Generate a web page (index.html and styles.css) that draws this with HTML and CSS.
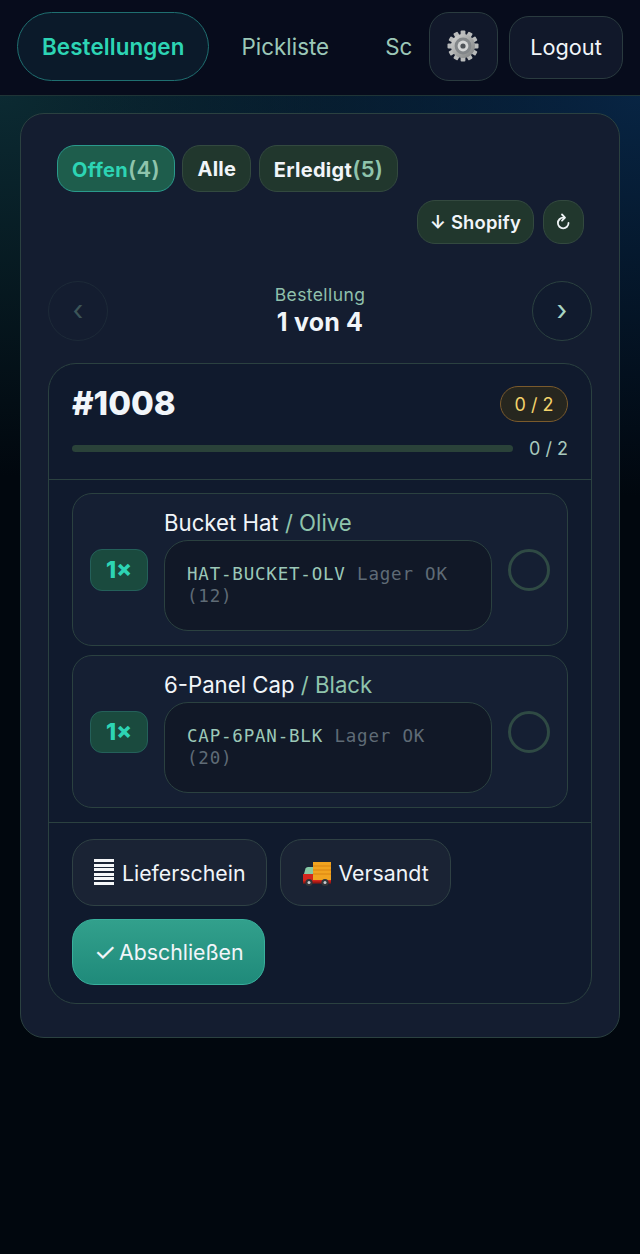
FILE: index.html
```html
<!DOCTYPE html>
<html lang="de">
<head>
    <meta charset="UTF-8">
    <meta name="viewport" content="width=device-width, initial-scale=1.0">
    <title>Bestellungen</title>
    <link rel="stylesheet" href="styles.css">
</head>
<body>
    <header class="topbar">
        <nav class="tabs">
            <a class="tab tab-active">Bestellungen</a>
            <a class="tab">Pickliste</a>
            <a class="tab">Sc</a>
        </nav>
        <button class="gear-btn" aria-label="Einstellungen">
            <svg class="gear" width="34" height="34" viewBox="0 0 34 34">
                <defs>
                    <linearGradient id="gearFill" x1="0" y1="0" x2="1" y2="1">
                        <stop offset="0" stop-color="#d8d9d8"/>
                        <stop offset="0.55" stop-color="#a2a4a4"/>
                        <stop offset="1" stop-color="#7d8081"/>
                    </linearGradient>
                </defs>
                <g fill="#b9bbbb">
                    <rect x="14.6" y="1.5" width="4.8" height="6" rx="1"/>
                    <rect x="14.6" y="1.5" width="4.8" height="6" rx="1" transform="rotate(30 17 17)"/>
                    <rect x="14.6" y="1.5" width="4.8" height="6" rx="1" transform="rotate(60 17 17)"/>
                    <rect x="14.6" y="1.5" width="4.8" height="6" rx="1" transform="rotate(90 17 17)"/>
                    <rect x="14.6" y="1.5" width="4.8" height="6" rx="1" transform="rotate(120 17 17)"/>
                    <rect x="14.6" y="1.5" width="4.8" height="6" rx="1" transform="rotate(150 17 17)"/>
                    <rect x="14.6" y="1.5" width="4.8" height="6" rx="1" transform="rotate(180 17 17)"/>
                    <rect x="14.6" y="1.5" width="4.8" height="6" rx="1" transform="rotate(210 17 17)"/>
                    <rect x="14.6" y="1.5" width="4.8" height="6" rx="1" transform="rotate(240 17 17)"/>
                    <rect x="14.6" y="1.5" width="4.8" height="6" rx="1" transform="rotate(270 17 17)"/>
                    <rect x="14.6" y="1.5" width="4.8" height="6" rx="1" transform="rotate(300 17 17)"/>
                    <rect x="14.6" y="1.5" width="4.8" height="6" rx="1" transform="rotate(330 17 17)"/>
                </g>
                <circle cx="17" cy="17" r="12" fill="url(#gearFill)"/>
                <circle cx="17" cy="17" r="8.4" fill="#83878a"/>
                <circle cx="17" cy="17" r="5.4" fill="#d4d6d6"/>
                <circle cx="17" cy="17" r="2.6" fill="#4e5358"/>
            </svg>
        </button>
        <button class="logout-btn">Logout</button>
    </header>

    <main class="panel">
        <div class="filters">
            <button class="chip chip-active">Offen<span class="chip-count">(4)</span></button>
            <button class="chip">Alle</button>
            <button class="chip">Erledigt<span class="chip-count">(5)</span></button>
        </div>
        <div class="sync">
            <button class="sync-btn">↓ Shopify</button>
            <button class="sync-btn sync-reload" aria-label="Neu laden">
                <svg width="14" height="18" viewBox="0 0 14 18" fill="none" stroke="#eef3f5" stroke-width="1.8" stroke-linecap="round" stroke-linejoin="round">
                    <path d="M11.5 10A5.3 5.3 0 1 1 6.2 4.7"/>
                    <path d="M5 1.5 8 4.6 5 7.7"/>
                </svg>
            </button>
        </div>

        <div class="pager">
            <button class="round-btn round-off">‹</button>
            <div class="pager-label">
                <div class="pager-small">Bestellung</div>
                <div class="pager-big">1 von 4</div>
            </div>
            <button class="round-btn">›</button>
        </div>

        <section class="order">
            <div class="order-head">
                <div class="order-top">
                    <h2 class="order-no">#1008</h2>
                    <span class="order-badge">0 / 2</span>
                </div>
                <div class="progress-row">
                    <div class="progress"></div>
                    <span class="progress-text">0 / 2</span>
                </div>
            </div>

            <div class="items">
                <div class="item">
                    <span class="qty">1×</span>
                    <div class="item-main">
                        <div class="item-name">Bucket Hat <span class="item-variant">/ Olive</span></div>
                        <div class="sku-box"><span class="sku">HAT-BUCKET-OLV</span> <span>Lager OK</span> <span>(12)</span></div>
                    </div>
                    <span class="check"></span>
                </div>
                <div class="item">
                    <span class="qty">1×</span>
                    <div class="item-main">
                        <div class="item-name">6-Panel Cap <span class="item-variant">/ Black</span></div>
                        <div class="sku-box"><span class="sku">CAP-6PAN-BLK</span> <span>Lager OK</span> <span>(20)</span></div>
                    </div>
                    <span class="check"></span>
                </div>
            </div>

            <div class="actions">
                <button class="action"><span class="doc-icon"></span>Lieferschein</button>
                <button class="action">
                    <svg class="truck" width="28" height="25" viewBox="0 0 28 25">
                        <rect x="10" y="0" width="18" height="18" fill="#f1a31f"/>
                        <g fill="#d98412">
                            <rect x="10" y="3.5" width="18" height="1"/>
                            <rect x="10" y="7.5" width="18" height="1"/>
                            <rect x="10" y="11.5" width="18" height="1"/>
                        </g>
                        <path d="M1 12 2.5 6.5Q3 5 5 5H10V12Z" fill="#86c9a6"/>
                        <path d="M0 12H10V18H28V21H0Z" fill="#d3261d"/>
                        <rect x="0" y="19.5" width="28" height="2" fill="#9c1712"/>
                        <circle cx="6" cy="20.5" r="3.6" fill="#33363a"/>
                        <circle cx="6" cy="20.5" r="1.5" fill="#c9ccd0"/>
                        <circle cx="22" cy="20.5" r="3.6" fill="#33363a"/>
                        <circle cx="22" cy="20.5" r="1.5" fill="#c9ccd0"/>
                    </svg>
                    Versandt
                </button>
                <button class="action action-done"><span class="done-mark">✓</span>Abschließen</button>
            </div>
        </section>
    </main>
</body>
</html>
```

FILE: styles.css
```css
* {
    box-sizing: border-box;
}
html, body {
    margin: 0;
    height: 100%;
}
body {
    height: 1254px;
    overflow: hidden;
    font-family: Inter, "Liberation Sans", sans-serif;
    color: #eef3f8;
    background:
        radial-gradient(600px 400px at 100% 96px, rgba(8, 38, 70, 0.95), transparent),
        radial-gradient(600px 380px at 0 96px, rgba(12, 44, 52, 0.95), transparent),
        #01070e;
}
button {
    font-family: inherit;
    color: inherit;
    cursor: pointer;
}

/* top bar */
.topbar {
    height: 96px;
    display: flex;
    align-items: flex-start;
    padding: 12px 0 0 17px;
    background: #070c1c;
    border-bottom: 1px solid #1f3436;
}
.tabs {
    width: 396px;
    flex: none;
    display: flex;
    gap: 8px;
}
.tab {
    flex: none;
    height: 69px;
    padding: 0 24px 1px;
    display: flex;
    align-items: center;
    border: 1px solid transparent;
    border-radius: 35px;
    font-size: 22.4px;
    color: #9cc8b8;
}
.tab:last-child {
    margin-left: -2px;
    padding-right: 0;
}
.tab-active {
    padding-right: 23px;
    color: #2dd4b4;
    font-weight: 600;
    letter-spacing: 0.1px;
    border-color: #1f6f70;
    background: #0b1a2a;
}
.gear-btn {
    width: 69px;
    height: 69px;
    margin-left: 16px;
    flex: none;
    padding: 0;
    display: flex;
    align-items: center;
    justify-content: center;
    background: #11182a;
    border: 1px solid #2a3b3f;
    border-radius: 20px;
}
.gear {
    margin: 0 2px 1px 0;
}
.logout-btn {
    width: 114px;
    height: 63px;
    margin: 4px 0 0 11px;
    padding: 0 0 2px;
    flex: none;
    font-size: 21.7px;
    color: #f1f5f9;
    background: #11182a;
    border: 1px solid #2a3b3f;
    border-radius: 20px;
}

/* main panel */
.panel {
    width: 600px;
    height: 925px;
    margin: 17px 0 0 20px;
    padding: 31px 27px 0;
    background: #141d30;
    border: 1px solid #2b4140;
    border-radius: 24px;
}
.filters {
    display: flex;
    gap: 7.5px;
    padding-left: 9px;
}
.chip {
    height: 47px;
    padding: 0 14px;
    font-size: 20px;
    font-weight: 700;
    letter-spacing: 0.3px;
    color: #f1f5f9;
    background: #21372d;
    border: 1px solid #33493f;
    border-radius: 18px;
}
.chip-active {
    color: #2dd4b4;
    background: #1e5d4c;
    border-color: #2a9a8c;
}
.chip-count {
    font-size: 22px;
    font-weight: 600;
    color: #8fc4ac;
}
.sync {
    display: flex;
    justify-content: flex-end;
    gap: 9px;
    margin-top: 8px;
    padding-right: 8px;
}
.sync-btn {
    height: 44px;
    padding: 0 12px;
    font-size: 18.4px;
    font-weight: 600;
    letter-spacing: 0.2px;
    color: #f1f5f9;
    background: #21372d;
    border: 1px solid #33493f;
    border-radius: 18px;
}
.sync-reload {
    width: 41px;
    padding: 0;
    display: flex;
    align-items: center;
    justify-content: center;
}

/* pager */
.pager {
    display: flex;
    align-items: center;
    justify-content: space-between;
    margin-top: 37px;
}
.round-btn {
    width: 60px;
    height: 60px;
    padding: 0 0 2px;
    font-size: 28px;
    color: #a8d5c2;
    background: #111b2e;
    border: 1px solid #2b4140;
    border-radius: 50%;
}
.round-off {
    color: #3c5558;
    background: transparent;
    border-color: #1d2a38;
}
.pager-label {
    margin-bottom: 2px;
    text-align: center;
}
.pager-small {
    font-size: 17.5px;
    letter-spacing: 0.4px;
    line-height: 24px;
    color: #8fc0ac;
}
.pager-big {
    font-size: 25px;
    letter-spacing: 0.2px;
    line-height: 30px;
    font-weight: 700;
    color: #f1f5f9;
}

/* order card */
.order {
    margin-top: 22px;
    height: 641px;
    background: #101a2d;
    border: 1px solid #2b4140;
    border-radius: 28px;
}
.order-head {
    height: 116px;
    padding: 22px 23px 0;
    border-bottom: 1px solid #2b4140;
}
.order-top {
    display: flex;
    align-items: center;
    justify-content: space-between;
}
.order-no {
    margin: 0 0 2px;
    font-size: 33px;
    line-height: 34px;
    font-weight: 800;
    color: #f1f5f9;
}
.order-badge {
    width: 68px;
    height: 36px;
    display: flex;
    align-items: center;
    justify-content: center;
    font-size: 18px;
    color: #f3d36b;
    background: #26261f;
    border: 1px solid #7a5a2c;
    border-radius: 18px;
}
.progress-row {
    display: flex;
    align-items: center;
    gap: 16px;
    margin-top: 13px;
}
.progress {
    flex: 1;
    height: 7px;
    background: #2a4239;
    border-radius: 4px;
}
.progress-text {
    padding-top: 2px;
    font-size: 18px;
    line-height: 24px;
    color: #a8c9bd;
}

/* items */
.items {
    display: flex;
    flex-direction: column;
    gap: 9px;
    padding: 13px 23px 14px;
    border-bottom: 1px solid #2b4140;
}
.item {
    height: 153px;
    display: flex;
    align-items: center;
    padding: 0 17px;
    background: #151f33;
    border: 1px solid #2b4140;
    border-radius: 20px;
}
.qty {
    width: 58px;
    height: 42px;
    flex: none;
    display: flex;
    align-items: center;
    justify-content: center;
    font-size: 23px;
    font-weight: 800;
    color: #2dd4b4;
    background: #1a4a3e;
    border: 1px solid #24605a;
    border-radius: 12px;
}
.item-main {
    width: 328px;
    flex: none;
    margin-left: 16px;
    padding-top: 2px;
}
.item-name {
    margin-bottom: 4px;
    font-size: 22.2px;
    line-height: 26px;
    color: #f1f5f9;
}
.item-variant {
    color: #8fc4ac;
}
.sku-box {
    height: 91px;
    padding: 22px 22px 0;
    font-family: "DejaVu Sans Mono", monospace;
    font-size: 17.5px;
    letter-spacing: 0.8px;
    line-height: 22px;
    color: #5f6b76;
    background: #111827;
    border: 1px solid #2b4140;
    border-radius: 24px;
}
.sku {
    color: #9cc8b8;
}
.check {
    width: 42px;
    height: 42px;
    flex: none;
    margin-left: 16px;
    border: 3px solid #2f4a44;
    border-radius: 50%;
}

/* actions */
.actions {
    display: flex;
    flex-wrap: wrap;
    gap: 13px;
    padding: 16px 23px 0;
}
.action {
    height: 67px;
    padding: 0 21px;
    display: flex;
    align-items: center;
    gap: 8px;
    font-size: 21.3px;
    color: #f1f5f9;
    background: #1a2334;
    border: 1px solid #2f4144;
    border-radius: 22px;
}
.truck {
    margin: 4px -1px 0 1px;
}
.action-done {
    height: 66px;
    padding-right: 20px;
    background: linear-gradient(#32a08c, #1f8a7a);
    border-color: #38b09c;
}
.done-mark {
    width: 17px;
    font-size: 25px;
    line-height: 24px;
}
.doc-icon {
    width: 20px;
    height: 27px;
    background: repeating-linear-gradient(#f4f6f8 0 3px, transparent 3px 4.6px);
}
```
